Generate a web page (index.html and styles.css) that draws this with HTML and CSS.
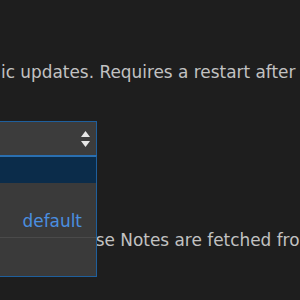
FILE: index.html
```html
<!DOCTYPE html>
<html lang="en">
<head>
  <meta charset="UTF-8">
  <title>Updates</title>
  <link rel="stylesheet" href="styles.css">
</head>
<body>
  <div class="page">
    <p class="desc">ic updates. Requires a restart after</p>

    <div class="field">
      <div class="select">
        <svg class="arrows" width="9" height="16" viewBox="0 0 9 16">
          <path d="M4.5 0 L9 6 H0 Z" fill="#e6e6e6"/>
          <path d="M4.5 16 L9 10 H0 Z" fill="#e6e6e6"/>
        </svg>
      </div>
      <div class="menu">
        <div class="option active"></div>
        <div class="option">default</div>
        <div class="divider"></div>
        <div class="filler"></div>
      </div>
    </div>

    <p class="notes">Release Notes are fetched from</p>
  </div>
</body>
</html>
```

FILE: styles.css
```css
* {
  box-sizing: border-box;
}

html, body {
  margin: 0;
  background: #1e1e1e;
}

body {
  color: #c2c2c2;
  font-family: 'DejaVu Sans', sans-serif;
  font-size: 16.9px;
}

.page {
  height: 300px;
  overflow: hidden;
  padding-top: 62px;
}

.desc {
  margin: 0 0 0 1px;
  line-height: 20px;
  white-space: nowrap;
}

.field {
  position: relative;
  margin-top: 39px;
}

.select {
  width: 99px;
  height: 35px;
  margin-left: -2px;
  background: #3c3c3c;
  border: 1px solid #1f5f9c;
  display: flex;
  align-items: center;
  justify-content: flex-end;
  padding-right: 6px;
}

.arrows {
  display: block;
}

.menu {
  position: absolute;
  z-index: 2;
  top: 34px;
  left: -2px;
  width: 99px;
  background: #3a3a3a;
  border: 1px solid #1f5f9c;
  border-top: 2px solid #2a6fb0;
}

.option {
  height: 26px;
  padding-right: 14px;
  text-align: right;
  color: #4a8fe0;
  line-height: 26px;
}

.option.active {
  background: #0b2c4a;
}

.option + .option {
  height: 54px;
  line-height: 20px;
  padding-top: 28px;
}

.divider {
  height: 1px;
  background: #4a4a4a;
}

.filler {
  height: 38px;
}

.notes {
  margin: 74px 0 0 49px;
  line-height: 20px;
  white-space: nowrap;
}
```
